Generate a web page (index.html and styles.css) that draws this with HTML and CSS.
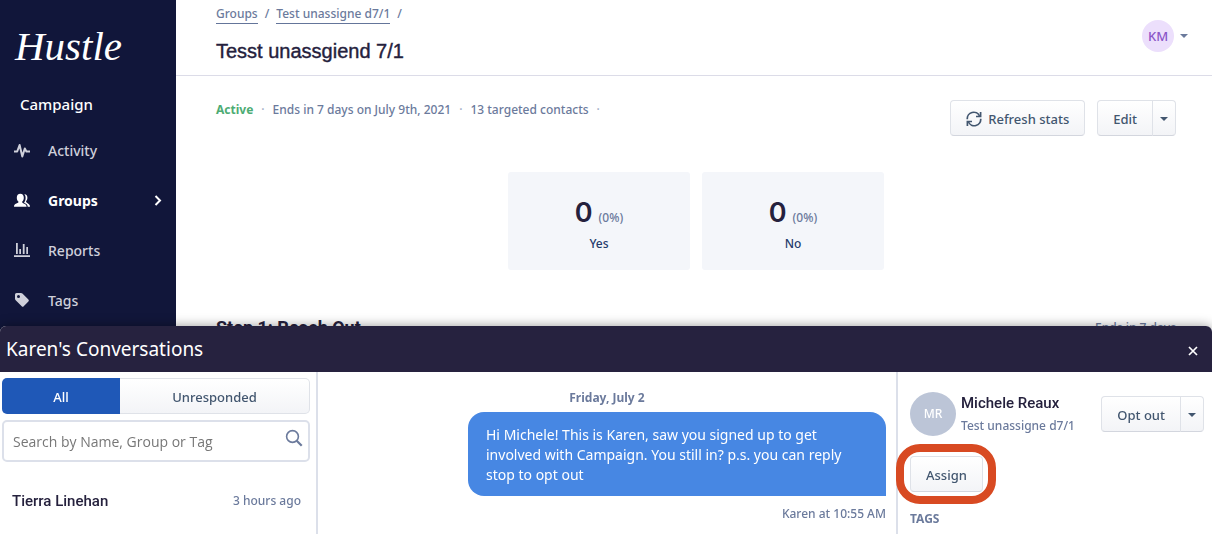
FILE: index.html
```html
<!DOCTYPE html>
<html lang="en">
<head>
<meta charset="utf-8">
<title>Hustle</title>
<link rel="stylesheet" href="styles.css">
</head>
<body>
<div class="app">
  <aside class="sidebar">
    <div class="logo">Hustle</div>
    <div class="org">Campaign</div>
    <nav class="nav">
      <a class="nav-item" href="#">
        <svg class="nav-icon" viewBox="0 0 16 16"><path d="M0 8.500h3.200L5.600 2 8.300 13.500 10.800 5.500l1.600 3H16" fill="none" stroke="currentColor" stroke-width="2" stroke-linejoin="round"/></svg>
        <span>Activity</span>
      </a>
      <a class="nav-item is-active" href="#">
        <svg class="nav-icon" viewBox="0 0 16 16" fill="currentColor"><path d="M6.300 .8c2.200 0 3.500 1.600 3.500 3.900 0 1.600-.6 3-1.600 3.900-.2 1.200.3 1.500 2.100 2.100 1.600.6 2.200 1.400 2.300 3.100H0c0-1.700.7-2.600 2.400-3.200 1.700-.6 2.200-.9 2-2C3.400 7.700 2.800 6.300 2.800 4.700 2.800 2.400 4.100.8 6.300.8z"/><path d="M10.300 1.300c2-.2 3.100 1.300 3.100 3.500 0 1.400-.5 2.500-1.300 3.300-.2 1.100.3 1.500 1.800 2.300 1.600.8 2.100 1.800 2.100 3.400h-2.300c-.1-1.900-1-3-3.100-3.800-.4-.2-.5-.5-.4-.8.9-1 1.400-2.600 1.400-4.300 0-1.500-.4-2.700-1.300-3.600z"/></svg>
        <span>Groups</span>
        <svg class="nav-chevron" viewBox="0 0 8 12"><path d="M1.500 1 6 5.500 1.500 10" fill="none" stroke="currentColor" stroke-width="2"/></svg>
      </a>
      <a class="nav-item" href="#">
        <svg class="nav-icon" viewBox="0 0 16 16" fill="currentColor"><path d="M0 12.200h16V14H0zM2 0h1.800v11H2zM5.300 6h1.700v5H5.300zM8.800 1h1.800v10H8.800zM12.300 4H14v7h-1.700z"/></svg>
        <span>Reports</span>
      </a>
      <a class="nav-item" href="#">
        <svg class="nav-icon" viewBox="0 0 16 16" fill="currentColor"><path fill-rule="evenodd" d="M2.500 0H7q.8 0 1.400.6l6 6q1 1 0 2l-4.700 4.700q-1 1-2 0l-6-6Q1 6.600 1 5.800V1.500Q1 0 2.500 0zM4.500 2a1.500 1.500 0 1 0 0 3 1.500 1.500 0 0 0 0-3z"/></svg>
        <span>Tags</span>
      </a>
    </nav>
  </aside>

  <main class="main">
    <header class="page-header">
      <div>
        <nav class="crumbs"><a href="#">Groups</a><span>/</span><a href="#">Test unassigne d7/1</a><span>/</span></nav>
        <h1 class="page-title">Tesst unassgiend 7/1</h1>
      </div>
      <button class="account" type="button" aria-label="Account menu"><span class="account-avatar">KM</span><span class="caret"></span></button>
    </header>

    <section class="content">
      <div class="toolbar">
        <p class="status"><strong>Active</strong><i>·</i><span>Ends in 7 days on July 9th, 2021</span><i>·</i><span>13 targeted contacts</span><i>·</i></p>
        <div class="actions">
          <button class="btn" type="button">
            <svg class="refresh" viewBox="0 0 16 16" fill="none" stroke="currentColor" stroke-width="1.700"><path d="M1.300 8.200A6.400 6.400 0 0 1 13.500 5M14.700 7.800A6.400 6.400 0 0 1 2.500 11"/><path d="M14.600 1v4.500H10M1.400 15v-4.500H6"/></svg>
            Refresh stats
          </button>
          <div class="split">
            <button class="btn" type="button">Edit</button>
            <button class="btn btn-caret" type="button" aria-label="More edit options"><span class="caret"></span></button>
          </div>
        </div>
      </div>
      <div class="stats">
        <div class="stat"><div class="stat-figure"><b>0</b><span>(0%)</span></div><div class="stat-label">Yes</div></div>
        <div class="stat"><div class="stat-figure"><b>0</b><span>(0%)</span></div><div class="stat-label">No</div></div>
      </div>
      <div class="step">
        <h2>Step 1: Reach Out</h2>
        <span>Ends in 7 days</span>
      </div>
    </section>
  </main>
</div>

<section class="dock">
  <header class="dock-header">
    <h2>Karen's Conversations</h2>
    <button class="close" type="button" aria-label="Close"><svg viewBox="0 0 10 10"><path d="m1 1 8 8M9 1 1 9" stroke="currentColor" stroke-width="1.700"/></svg></button>
  </header>
  <div class="dock-body">
    <div class="inbox">
      <div class="tabs">
        <button class="tab is-selected" type="button">All</button>
        <button class="tab" type="button">Unresponded</button>
      </div>
      <div class="search">
        <input type="text" aria-label="Search conversations" placeholder="Search by Name, Group or Tag">
        <svg viewBox="0 0 18 18" fill="none" stroke="currentColor"><circle cx="7.500" cy="7.500" r="5.900" stroke-width="1.600"/><path d="m11.700 11.700 5 5" stroke-width="2.200"/></svg>
      </div>
      <a class="thread" href="#"><strong>Tierra Linehan</strong><time>3 hours ago</time></a>
    </div>
    <div class="chat">
      <div class="chat-date">Friday, July 2</div>
      <p class="bubble">Hi Michele! This is Karen, saw you signed up to get involved with Campaign. You still in? p.s. you can reply stop to opt out</p>
      <div class="chat-meta">Karen at 10:55 AM</div>
    </div>
    <aside class="contact">
      <div class="contact-top">
        <span class="contact-avatar">MR</span>
        <div class="contact-info"><strong>Michele Reaux</strong><span>Test unassigne d7/1</span></div>
        <div class="split">
          <button class="btn" type="button">Opt out</button>
          <button class="btn btn-caret" type="button" aria-label="More contact options"><span class="caret"></span></button>
        </div>
      </div>
      <div class="assign"><button class="btn" type="button">Assign</button></div>
      <h3>TAGS</h3>
    </aside>
  </div>
</section>
</body>
</html>
```
FILE: styles.css
```css
* { box-sizing: border-box; }
body {
  margin: 0;
  font-family: "Noto Sans", "Open Sans", sans-serif;
  font-size: 12px;
  font-weight: 500;
  line-height: 20px;
  color: #6b7a9c;
  background: #fff;
  overflow: hidden;
}
h1, h2, h3, p { margin: 0; }
button, input { font: inherit; color: inherit; }
button { cursor: pointer; }
a { color: inherit; text-decoration: none; }

.app { display: flex; min-height: 100vh; }
.sidebar { width: 176px; flex: none; padding-top: 28px; background: #11163a; color: #cfd0da; }
.logo {
  padding-left: 15px;
  font: italic 41px/36px "Liberation Serif", serif;
  color: #fff;
}
.org { padding: 30px 20px 0; font-size: 15px; color: #fff; }
.nav { padding-top: 12px; }
.nav-item { display: flex; align-items: center; height: 50px; padding: 0 14px; gap: 18px; font-size: 14px; }
.nav-item.is-active { color: #fff; font-weight: 700; }
.nav-icon { width: 16px; height: 16px; }
.nav-chevron { width: 8px; height: 12px; margin-left: auto; }

.main { flex: 1; min-width: 0; }
.page-header {
  display: flex;
  justify-content: space-between;
  align-items: flex-start;
  height: 76px;
  padding: 4px 24px 0 40px;
  border-bottom: 1px solid #dcdce8;
}
.crumbs { display: flex; gap: 7px; }
.crumbs a { line-height: 16px; margin-top: 2px; border-bottom: 1px solid #64759a; }
.page-title { margin-top: 13px; font: 500 20px/28px "Liberation Sans", sans-serif; color: #25213d; -webkit-text-stroke: 0.4px; }
.account { display: flex; align-items: center; gap: 6px; margin-top: 16px; padding: 0; border: 0; background: none; }
.account-avatar {
  width: 32px;
  border-radius: 50%;
  background: #ecdffc;
  color: #8a55c8;
  font-size: 13px;
  line-height: 32px;
}
.caret { width: 0; border: 4px solid transparent; border-top-color: currentColor; border-bottom: 0; }

.content { padding: 24px 36px 0 40px; }
.toolbar { display: flex; justify-content: space-between; }
.status { display: flex; gap: 8px; }
.status strong { color: #4dac74; }
.status i { font-style: normal; color: #a3aec6; }
.actions { display: flex; gap: 12px; }
.btn {
  display: flex;
  align-items: center;
  gap: 6px;
  height: 36px;
  padding: 2px 15px 0;
  border: 1px solid #dfe2e8;
  border-bottom-color: #d3d6de;
  border-radius: 4px;
  background: linear-gradient(#fff, #f3f4f7);
  color: #42566f;
  font-size: 13px;
}
.refresh { width: 16px; height: 16px; }
.split { display: flex; }
.split .btn:first-child { border-radius: 4px 0 0 4px; }
.split .btn-caret { padding: 2px 7px 0; margin-left: -1px; border-radius: 0 4px 4px 0; }

.stats { display: flex; justify-content: center; gap: 12px; margin-top: 36px; }
.stat { width: 182px; height: 98px; padding-top: 23px; border-radius: 3px; background: #f4f6fa; text-align: center; }
.stat-figure { display: flex; justify-content: center; align-items: baseline; gap: 6px; line-height: 32px; }
.stat-figure b { font: 600 27px/36px Inter, sans-serif; color: #25213d; }
.stat-label { color: #243b6b; }
.step { display: flex; justify-content: space-between; margin-top: 46px; }
.step h2 { font: 700 18px/24px Roboto, sans-serif; color: #25213d; }
.step span { line-height: 24px; }

.dock { position: fixed; left: 0; right: 0; bottom: 0; background: #fff; border-radius: 6px 6px 0 0; box-shadow: 0 0 12px rgba(0, 0, 0, 0.4); }
.dock-header {
  display: flex;
  justify-content: space-between;
  align-items: center;
  height: 46px;
  padding: 0 14px 0 6px;
  border-radius: 6px 6px 0 0;
  background: #26223f;
  color: #fff;
}
.dock-header h2 { font-size: 19px; font-weight: 400; }
.close { padding: 0; border: 0; background: none; line-height: 0; margin-top: 4px; }
.close svg { width: 10px; height: 10px; }
.dock-body { display: grid; grid-template-columns: 318px minmax(0, 1fr) 316px; height: 162px; }
.inbox { padding: 6px 6px 0 2px; border-right: 2px solid #dce0ea; }
.tabs { display: flex; height: 36px; }
.tab {
  flex: 1;
  padding-top: 3px;
  border: 1px solid #dfe2e8;
  border-left: 0;
  border-radius: 0 5px 5px 0;
  background: linear-gradient(#fff, #f3f4f7);
  color: #42566f;
  font-size: 13px;
}
.tab.is-selected { flex: 0 0 118px; border: 0; border-radius: 5px 0 0 5px; background: #1f58b7; color: #fff; }
.search { position: relative; margin-top: 6px; }
.search input { width: 100%; height: 42px; padding: 0 40px 0 9px; border: 2px solid #dce0ea; border-radius: 5px; font-family: "Open Sans", sans-serif; font-size: 14px; }
.search input::placeholder { color: #777; opacity: 1; }
.search svg { position: absolute; right: 7px; top: 9px; width: 18px; height: 18px; }
.thread { display: flex; justify-content: space-between; padding: 29px 9px 0 10px; }
.thread strong, .contact-info strong { font: 500 15px/20px Roboto, sans-serif; color: #25213d; }
.chat { padding: 16px 10px 0; display: flex; flex-direction: column; }
.chat-date { text-align: center; font-weight: 700; }
.bubble {
  align-self: flex-end;
  width: 418px;
  margin-top: 4px;
  padding: 13px 18px 11px;
  border-radius: 16px 16px 0 16px;
  background: #4787e3;
  color: #fff;
  font-size: 14px;
  font-weight: 400;
}
.chat-meta { margin-top: 8px; text-align: right; }
.contact { padding: 20px 8px 0 12px; border-left: 2px solid #dce0ea; }
.contact-top { display: flex; }
.contact-avatar { width: 46px; height: 44px; border-radius: 50%; background: #bcc5d7; color: #fff; line-height: 44px; text-align: center; }
.contact-info { flex: 1; display: flex; flex-direction: column; gap: 3px; padding-top: 1px; margin-left: 5px; }
.contact-top .split { margin-top: 4px; }
.assign { position: relative; display: inline-block; margin-top: 20px; }
.assign::after { content: ""; position: absolute; inset: -12px -13px -12px -14px; border: 8px solid #d84a22; border-radius: 24px; pointer-events: none; }
.contact h3 { margin-top: 17px; font-size: 12px; font-weight: 700; }
```
